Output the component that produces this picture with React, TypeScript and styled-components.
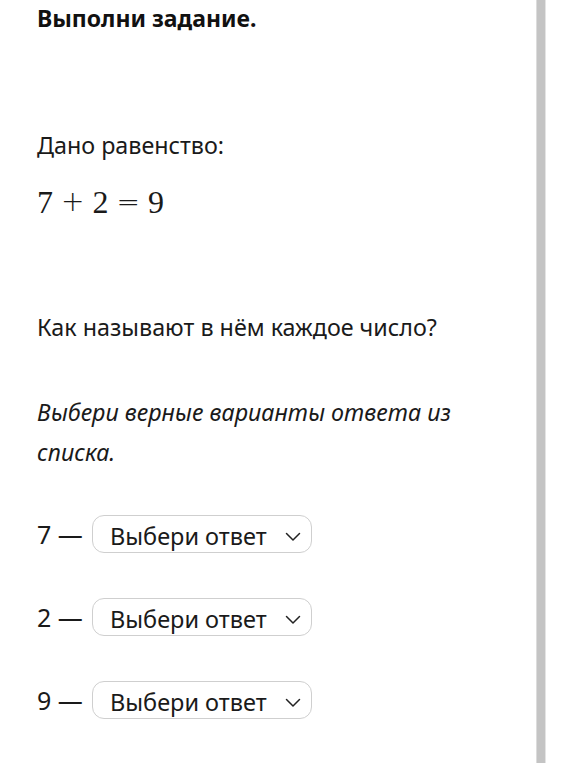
import React from "react"
import styled, { createGlobalStyle } from "styled-components"

const GlobalStyle = createGlobalStyle`
  html, body {
    margin: 0;
    padding: 0;
    background: #ffffff;
  }
  body {
    font-family: "Noto Sans", "Open Sans", sans-serif;
    color: #1a1a1a;
  }
`

const Page = styled.div`
  display: flex;
  width: 586px;
  height: 763px;
  overflow: hidden;
`

const Content = styled.main`
  width: 536px;
  padding: 0 0 0 37px;
  box-sizing: border-box;
`

const Track = styled.div`
  width: 10px;
  height: 100%;
  background: #c4c4c4;
  border-left: 1px solid #dcdcdc;
  border-right: 1px solid #e4e4e4;
  box-sizing: border-box;
`

const Title = styled.h1`
  margin: 4px 0 0;
  font-size: 23px;
  line-height: 28px;
  font-weight: 700;
  color: #111;
  white-space: nowrap;
`

const Text = styled.p<{ $top: number }>`
  margin: ${(p) => p.$top}px 0 0;
  font-size: 23.3px;
  line-height: 30px;
  font-weight: 400;
  white-space: nowrap;
`

const Hint = styled.p`
  margin: 50px 0 0;
  font-size: 23.3px;
  line-height: 40px;
  font-style: italic;
  width: 440px;
`

const Formula = styled.div`
  margin: 27px 0 0;
  display: flex;
  align-items: center;
  height: 30px;
  line-height: 30px;
`

const Num = styled.span`
  font-family: "Liberation Serif", serif;
  font-size: 32px;
`

const Op = styled.span`
  font-family: "DejaVu Sans", sans-serif;
  font-weight: 200;
  font-size: 28px;
  margin: 0 8px;
`

const Rows = styled.div`
  margin-top: 43px;
  display: flex;
  flex-direction: column;
  gap: 45px;
`

const Row = styled.div`
  display: flex;
  align-items: center;
  height: 38px;
`

const Label = styled.span`
  width: 55px;
  font-size: 25px;
  white-space: nowrap;
`

const Select = styled.button`
  display: flex;
  align-items: center;
  justify-content: space-between;
  width: 220px;
  height: 38px;
  padding: 3px 10px 0 17px;
  box-sizing: border-box;
  border: 1px solid #cfcfcf;
  border-radius: 12px;
  background: #fff;
  font-family: "Noto Sans", sans-serif;
  font-size: 23.5px;
  line-height: 30px;
  color: #1a1a1a;
  cursor: pointer;
`

const Chevron = () => (
  <svg width="16" height="10" viewBox="0 0 16 10" fill="none" style={{ marginTop: 2 }}>
    <path d="M1.5 1.5 L8 8 L14.5 1.5" stroke="#222" strokeWidth="1.5" strokeLinecap="round" strokeLinejoin="round" />
  </svg>
)

const items = ["7", "2", "9"]

export default function App() {
  return (
    <Page>
      <GlobalStyle />
      <Content>
        <Title>Выполни задание.</Title>
        <Text $top={98}>Дано равенство:</Text>
        <Formula>
          <Num>7</Num>
          <Op>+</Op>
          <Num>2</Num>
          <Op>=</Op>
          <Num>9</Num>
        </Formula>
        <Text $top={95}>Как называют в нём каждое число?</Text>
        <Hint>Выбери верные варианты ответа из списка.</Hint>
        <Rows>
          {items.map((n) => (
            <Row key={n}>
              <Label>{n} —</Label>
              <Select>
                Выбери ответ
                <Chevron />
              </Select>
            </Row>
          ))}
        </Rows>
      </Content>
      <Track />
    </Page>
  )
}
